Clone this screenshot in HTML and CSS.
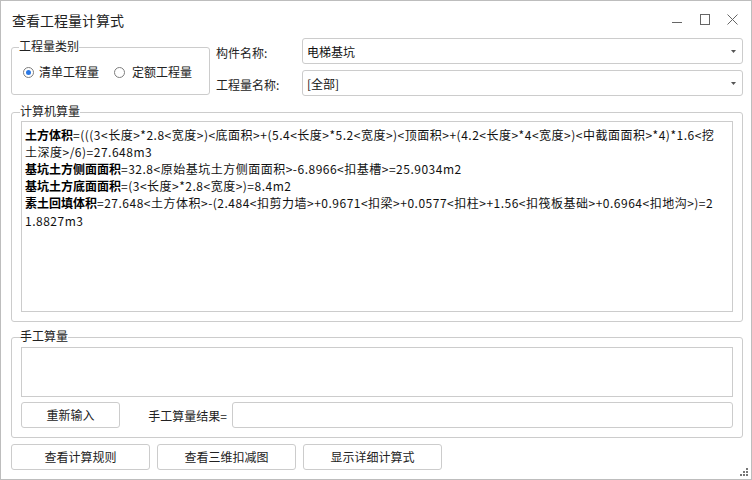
FILE: index.html
```html
<!DOCTYPE html>
<html lang="zh-CN">
<head>
<meta charset="utf-8">
<title>查看工程量计算式</title>
<link rel="stylesheet" href="styles.css">
</head>
<body>
<div class="window">
  <div class="titlebar">
    <span class="title">查看工程量计算式</span>
    <div class="controls">
      <svg class="ctl" width="12" height="13" viewBox="0 0 12 13"><line x1="1" y1="9.5" x2="11" y2="9.5" stroke="#666" stroke-width="1"/></svg>
      <svg class="ctl" width="12" height="13" viewBox="0 0 12 13"><rect x="1.5" y="1.5" width="9" height="10" fill="none" stroke="#666" stroke-width="1"/></svg>
      <svg class="ctl" width="12" height="13" viewBox="0 0 12 13"><path d="M0.5 1.5 L10.5 11.5 M10.5 1.5 L0.5 11.5" stroke="#666" stroke-width="1" fill="none"/></svg>
    </div>
  </div>
  <div class="content">
    <div class="top-row">
      <fieldset class="group group-type">
        <legend>工程量类别</legend>
        <div class="radios">
          <label class="radio"><span class="radio-dot checked"></span>清单工程量</label>
          <label class="radio"><span class="radio-dot"></span>定额工程量</label>
        </div>
      </fieldset>
      <div class="fields">
        <div class="field-row">
          <span class="field-label">构件名称:</span>
          <div class="combo"><span>电梯基坑</span><svg class="arrow" width="5" height="3" viewBox="0 0 5 3"><path d="M0 0 H5 L2.5 3 Z" fill="#555"/></svg></div>
        </div>
        <div class="field-row">
          <span class="field-label">工程量名称:</span>
          <div class="combo"><span>[全部]</span><svg class="arrow" width="5" height="3" viewBox="0 0 5 3"><path d="M0 0 H5 L2.5 3 Z" fill="#555"/></svg></div>
        </div>
      </div>
    </div>

    <fieldset class="group group-calc">
      <legend>计算机算量</legend>
      <div class="calc-text"><b>土方体积</b>=(((3&lt;长度&gt;*2.8&lt;宽度&gt;)&lt;底面积&gt;+(5.4&lt;长度&gt;*5.2&lt;宽度&gt;)&lt;顶面积&gt;+(4.2&lt;长度&gt;*4&lt;宽度&gt;)&lt;中截面面积&gt;*4)*1.6&lt;挖<br>土深度&gt;/6)=27.648m3<br><b>基坑土方侧面面积</b>=32.8&lt;原始基坑土方侧面面积&gt;-6.8966&lt;扣基槽&gt;=25.9034m2<br><b>基坑土方底面面积</b>=(3&lt;长度&gt;*2.8&lt;宽度&gt;)=8.4m2<br><b>素土回填体积</b>=27.648&lt;土方体积&gt;-(2.484&lt;扣剪力墙&gt;+0.9671&lt;扣梁&gt;+0.0577&lt;扣柱&gt;+1.56&lt;扣筏板基础&gt;+0.6964&lt;扣地沟&gt;)=2<br>1.8827m3</div>
    </fieldset>

    <fieldset class="group group-manual">
      <legend>手工算量</legend>
      <div class="manual-text"></div>
      <div class="manual-row">
        <button class="btn btn-reset">重新输入</button>
        <span class="result-label">手工算量结果=</span>
        <div class="result-input"></div>
      </div>
    </fieldset>

    <div class="actions">
      <button class="btn btn-action">查看计算规则</button>
      <button class="btn btn-action">查看三维扣减图</button>
      <button class="btn btn-action">显示详细计算式</button>
    </div>
  </div>
  <svg class="grip" width="9" height="9" viewBox="0 0 9 9">
    <rect x="6" y="0" width="2" height="2" fill="#777"/>
    <rect x="3" y="3" width="2" height="2" fill="#777"/>
    <rect x="6" y="3" width="2" height="2" fill="#777"/>
    <rect x="0" y="6" width="2" height="2" fill="#777"/>
    <rect x="3" y="6" width="2" height="2" fill="#777"/>
    <rect x="6" y="6" width="2" height="2" fill="#777"/>
  </svg>
</div>
</body>
</html>
```

FILE: styles.css
```css
* {
  box-sizing: border-box;
}

body {
  margin: 0;
  background: #ffffff;
  font-family: "Noto Sans CJK SC", "Microsoft YaHei", sans-serif;
  font-size: 12px;
  color: #222222;
}

.window {
  position: relative;
  width: 752px;
  height: 480px;
  border: 1px solid #bdbdbd;
  background: #ffffff;
  display: flex;
  flex-direction: column;
}

.titlebar {
  flex: none;
  height: 37px;
  display: flex;
  align-items: center;
  padding: 0 12px 0 11px;
}

.title {
  font-size: 14px;
  color: #222222;
}

.controls {
  margin-left: auto;
  display: flex;
  align-items: center;
  gap: 16px;
}

.ctl {
  display: block;
}

.content {
  flex: 1;
  display: flex;
  flex-direction: column;
  padding: 0 8px 0 10px;
}

.group {
  margin: 0;
  border: 1px solid #cccccc;
  border-radius: 3px;
  padding: 0 9px 9px;
  min-width: 0;
}

.group legend {
  padding: 0 0 3px;
  margin-left: -1px;
  line-height: 14px;
  font-size: 12px;
  color: #222222;
}

.top-row {
  flex: none;
  height: 58px;
  display: flex;
}

.group-type {
  flex: none;
  width: 199px;
  height: 56px;
  margin-top: 1px;
  padding: 9px 8px 0;
}

.radios {
  display: flex;
  align-items: center;
  height: 14px;
  padding-left: 3px;
  white-space: nowrap;
}

.radio {
  flex: none;
  display: flex;
  align-items: center;
  gap: 5px;
  line-height: 14px;
  margin-right: 15px;
  white-space: nowrap;
}

.radio + .radio {
  gap: 7px;
}

.radio-dot {
  flex: none;
  width: 11px;
  height: 11px;
  border: 1px solid #7d7d7d;
  border-radius: 50%;
  display: flex;
  align-items: center;
  justify-content: center;
}

.radio-dot.checked::after {
  content: "";
  width: 5px;
  height: 5px;
  border-radius: 50%;
  background: #2b78e4;
}

.fields {
  flex: 1;
  margin-left: 6px;
  display: flex;
  flex-direction: column;
  gap: 6px;
}

.field-row {
  display: flex;
  align-items: center;
  height: 26px;
}

.field-label {
  flex: none;
  width: 86px;
  padding-top: 2px;
}

.combo {
  flex: 1;
  height: 26px;
  border: 1px solid #cccccc;
  border-radius: 3px;
  padding: 0 6px 0 4px;
  display: flex;
  align-items: center;
  justify-content: space-between;
  color: #111111;
}

.group-calc {
  flex: none;
  height: 218px;
  margin-top: 8px;
}

.calc-text {
  height: 191px;
  border: 1px solid #cccccc;
  padding: 3.5px 3px;
  line-height: 17.2px;
  white-space: nowrap;
  letter-spacing: 0.5px;
  overflow: hidden;
  color: #111111;
}

.calc-text b {
  font-weight: 700;
  color: #000000;
  letter-spacing: 0;
}

.group-manual {
  flex: none;
  height: 109px;
  margin-top: 7px;
  padding-top: 1px;
}

.manual-text {
  height: 50px;
  border: 1px solid #cccccc;
}

.manual-row {
  margin-top: 5px;
  display: flex;
  align-items: center;
  height: 26px;
}

.btn {
  height: 26px;
  border: 1px solid #cccccc;
  border-radius: 3px;
  background: #ffffff;
  font-family: inherit;
  font-size: 12px;
  color: #222222;
  padding: 0;
  line-height: 14px;
}

.btn-reset {
  width: 99px;
}

.result-label {
  width: 112px;
  text-align: right;
  padding-right: 5px;
}

.result-input {
  flex: 1;
  height: 26px;
  border: 1px solid #cccccc;
  border-radius: 3px;
}

.actions {
  flex: none;
  margin-top: 6px;
  display: flex;
  gap: 7px;
}

.btn-action {
  width: 139px;
}

.grip {
  position: absolute;
  right: 2px;
  bottom: 2px;
}
```
